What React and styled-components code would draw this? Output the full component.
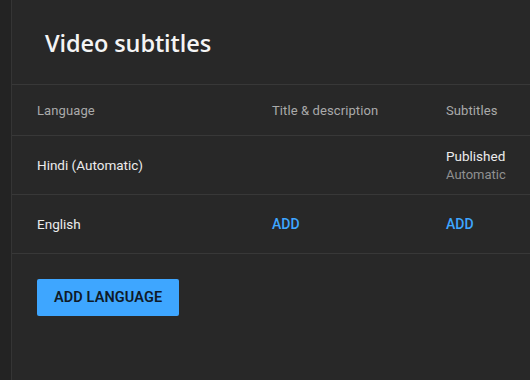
import React from 'react';
import styled, { createGlobalStyle } from 'styled-components';

const GlobalStyle = createGlobalStyle`
  html, body {
    margin: 0;
    padding: 0;
    background: #282828;
    font-family: Roboto, 'Liberation Sans', sans-serif;
  }
  * { box-sizing: border-box; }
`;

const Page = styled.div`
  display: flex;
  width: 530px;
  height: 380px;
  overflow: hidden;
  background: #282828;
`;

const SideStrip = styled.div`
  width: 12px;
  flex-shrink: 0;
  background: #232323;
  border-right: 1px solid #353535;
`;

const Panel = styled.main`
  flex: 1;
  display: flex;
  flex-direction: column;
`;

const Header = styled.header`
  height: 85px;
  display: flex;
  align-items: center;
  padding: 2px 0 0 33px;
  border-bottom: 1px solid #383838;
`;

const Title = styled.h1`
  margin: 0;
  font-family: 'Open Sans', 'DejaVu Sans', sans-serif;
  font-weight: 600;
  font-size: 23.5px;
  color: #f4f4f4;
  letter-spacing: -0.1px;
`;

const Row = styled.div`
  display: grid;
  grid-template-columns: 235px 174px 1fr;
  align-items: center;
  height: ${p => p.$h}px;
  padding-left: 25px;
  border-bottom: 1px solid #383838;
`;

const HeadCell = styled.div`
  font-size: 13px;
  color: #aaaaaa;
  font-weight: 400;
  letter-spacing: 0.1px;
`;

const Cell = styled.div`
  font-size: 13.5px;
  color: #ececec;
  display: flex;
  flex-direction: column;
  gap: 3px;
`;

const SubNote = styled.span`
  font-size: 13px;
  color: #909090;
`;

const AddLink = styled.span`
  font-size: 14px;
  font-weight: 500;
  color: #3ea6ff;
  text-transform: uppercase;
`;

const Footer = styled.div`
  padding: 25px 0 0 25px;
`;

const PrimaryButton = styled.button`
  height: 37px;
  padding: 0 17px;
  border: none;
  border-radius: 2px;
  background: #3ea6ff;
  color: #0f1a28;
  font-family: Roboto, 'Liberation Sans', sans-serif;
  font-weight: 600;
  font-size: 14.5px;
  letter-spacing: 0.1px;
  cursor: pointer;
`;

const App = () => (
  <>
    <GlobalStyle />
    <Page>
      <SideStrip />
      <Panel>
        <Header>
          <Title>Video subtitles</Title>
        </Header>
        <Row $h={51}>
          <HeadCell>Language</HeadCell>
          <HeadCell>Title &amp; description</HeadCell>
          <HeadCell>Subtitles</HeadCell>
        </Row>
        <Row $h={59}>
          <Cell>Hindi (Automatic)</Cell>
          <Cell />
          <Cell>
            Published
            <SubNote>Automatic</SubNote>
          </Cell>
        </Row>
        <Row $h={59}>
          <Cell>English</Cell>
          <AddLink>Add</AddLink>
          <AddLink>Add</AddLink>
        </Row>
        <Footer>
          <PrimaryButton>ADD LANGUAGE</PrimaryButton>
        </Footer>
      </Panel>
    </Page>
  </>
);

export default App;
